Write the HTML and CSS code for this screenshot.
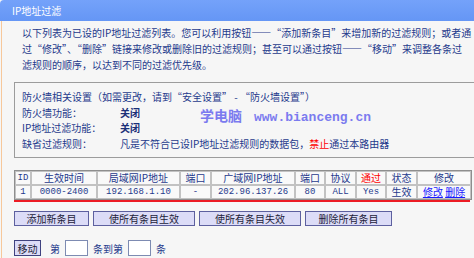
FILE: index.html
```html
<!DOCTYPE html>
<html lang="zh-CN">
<head>
<meta charset="utf-8">
<title>IP地址过滤</title>
<link rel="stylesheet" href="styles.css">
</head>
<body>
<div class="window">
  <div class="titlebar">IP地址过滤</div>
  <div class="content">
    <p class="intro">以下列表为已设的IP地址过滤列表。您可以利用按钮——“添加新条目”来增加新的过滤规则；或者通<br>过“修改”、“删除”链接来修改或删除旧的过滤规则；甚至可以通过按钮——“移动”来调整各条过<br>滤规则的顺序，以达到不同的过滤优先级。</p>

    <div class="fw">
      <div class="fw-row">防火墙相关设置（如需更改，请到“安全设置” - “防火墙设置”）</div>
      <div class="fw-row"><span class="lbl">防火墙功能：</span><span class="val">关闭</span></div>
      <div class="fw-row"><span class="lbl">IP地址过滤功能：</span><span class="val">关闭</span></div>
      <div class="fw-row"><span class="lbl">缺省过滤规则：</span><span>凡是不符合已设IP地址过滤规则的数据包，<span class="red">禁止</span>通过本路由器</span></div>
      <div class="watermark"><span class="wm-cn">学电脑</span><span class="wm-url">www.bianceng.cn</span></div>
    </div>

    <table class="rules">
      <colgroup>
        <col class="c-id"><col class="c-time"><col class="c-lan"><col class="c-port"><col class="c-wan"><col class="c-port2"><col class="c-proto"><col class="c-pass"><col class="c-state"><col class="c-edit">
      </colgroup>
      <tr>
        <th class="latin">ID</th><th>生效时间</th><th>局域网IP地址</th><th>端口</th><th>广域网IP地址</th><th>端口</th><th>协议</th><th class="red">通过</th><th>状态</th><th>修改</th>
      </tr>
      <tr>
        <td class="latin">1</td><td class="latin">0000-2400</td><td class="latin">192.168.1.10</td><td class="latin">-</td><td class="latin">202.96.137.26</td><td class="latin">80</td><td class="latin">ALL</td><td class="latin">Yes</td><td>生效</td><td><a href="#" class="lnk">修改</a> <a href="#" class="lnk">删除</a></td>
      </tr>
    </table>
    <div class="redline"></div>

    <div class="btns">
      <button class="btn btn-add">添加新条目</button>
      <button class="btn btn-on">使所有条目生效</button>
      <button class="btn btn-off">使所有条目失效</button>
      <button class="btn btn-del">删除所有条目</button>
    </div>

    <div class="move">
      <button class="btn btn-move">移动</button>
      <span class="mv-a">第</span>
      <input class="box" type="text">
      <span class="mv-b">条到第</span>
      <input class="box" type="text">
      <span class="mv-c">条</span>
    </div>
  </div>
</div>
</body>
</html>
```

FILE: styles.css
```css
html, body {
  margin: 0;
  padding: 0;
}
body {
  width: 474px;
  height: 258px;
  overflow: hidden;
  background: #f6f6f6;
  font-family: "Noto Sans CJK SC", "Noto Sans", sans-serif;
  font-size: 10px;
  color: #1f3a8c;
}
.window {
  width: 474px;
  height: 258px;
  overflow: hidden;
}
.titlebar {
  height: 21px;
  line-height: 21px;
  padding-left: 12px;
  background: linear-gradient(#74a2fa, #6596f5);
  border-top-left-radius: 4px;
  color: #ffffff;
  font-size: 10px;
}
.content {
  margin-left: 1px;
  border-left: 1px solid #f7c89b;
  padding: 4px 0 0 12px;
  height: 233px;
  overflow: hidden;
}
.intro {
  margin: 0;
  padding-left: 8px;
  line-height: 16px;
  white-space: nowrap;
}
.fw {
  position: relative;
  margin-top: 9px;
  width: 452px;
  border: 1px solid #9c9c9c;
  border-right: none;
  padding: 6px 0 6px 7px;
  line-height: 15.5px;
  white-space: nowrap;
}
.fw-row {
  display: flex;
}
.lbl {
  width: 98px;
}
.val {
  font-weight: bold;
  color: #1a2f78;
}
.red {
  color: #ff0000;
}
.watermark {
  position: absolute;
  left: 185px;
  top: 25px;
  display: flex;
  align-items: baseline;
  gap: 12px;
  color: #7b7bef;
  font-weight: bold;
}
.wm-cn {
  font-size: 14px;
}
.wm-url {
  font-family: "Liberation Mono", monospace;
  font-size: 13px;
}
.rules {
  margin-top: 12px;
  width: 456px;
  table-layout: fixed;
  border-collapse: separate;
  border-spacing: 0;
  border: 1px solid #8e8e8e;
  background: #f9f9f9;
}
.rules th, .rules td {
  border: 1px solid #c2c2c2;
  padding: 0;
  height: 12px;
  line-height: 12px;
  text-align: center;
  font-weight: normal;
  white-space: nowrap;
  overflow: hidden;
}
.rules th.red {
  color: #ff0000;
}
.latin {
  font-family: "Liberation Mono", monospace;
  font-size: 9px;
}
.c-id { width: 16px; }
.c-time { width: 66px; }
.c-lan { width: 83px; }
.c-port { width: 31px; }
.c-wan { width: 84px; }
.c-port2 { width: 30px; }
.c-proto { width: 31px; }
.c-pass { width: 30px; }
.c-state { width: 31px; }
.c-edit { width: 54px; }
.lnk {
  color: #1a1aff;
  text-decoration: underline;
}
.redline {
  width: 456px;
  height: 2px;
  background: #ec1c24;
}
.btns {
  display: flex;
  gap: 4px;
  margin-top: 9px;
}
.btn {
  height: 15px;
  padding: 0;
  margin: 0;
  border: 1px solid #5d609f;
  background: #dcdcf7;
  color: #1c1c3a;
  font-family: inherit;
  font-size: 10px;
  line-height: 13px;
}
.btn-add { width: 75px; }
.btn-on { width: 102px; }
.btn-off { width: 102px; }
.btn-del { width: 87px; }
.move {
  display: flex;
  align-items: center;
  margin-top: 14px;
}
.btn-move {
  width: 27px;
  height: 16px;
  border-color: #3f4280;
}
.mv-a {
  margin-left: 9px;
  margin-right: 5px;
}
.mv-b {
  margin-left: 5px;
  margin-right: 5px;
}
.mv-c {
  margin-left: 5px;
}
.box {
  width: 23px;
  height: 16px;
  box-sizing: border-box;
  border: 1px solid #7d8bb2;
  background: #ffffff;
  padding: 0;
  margin: 0;
}
```
